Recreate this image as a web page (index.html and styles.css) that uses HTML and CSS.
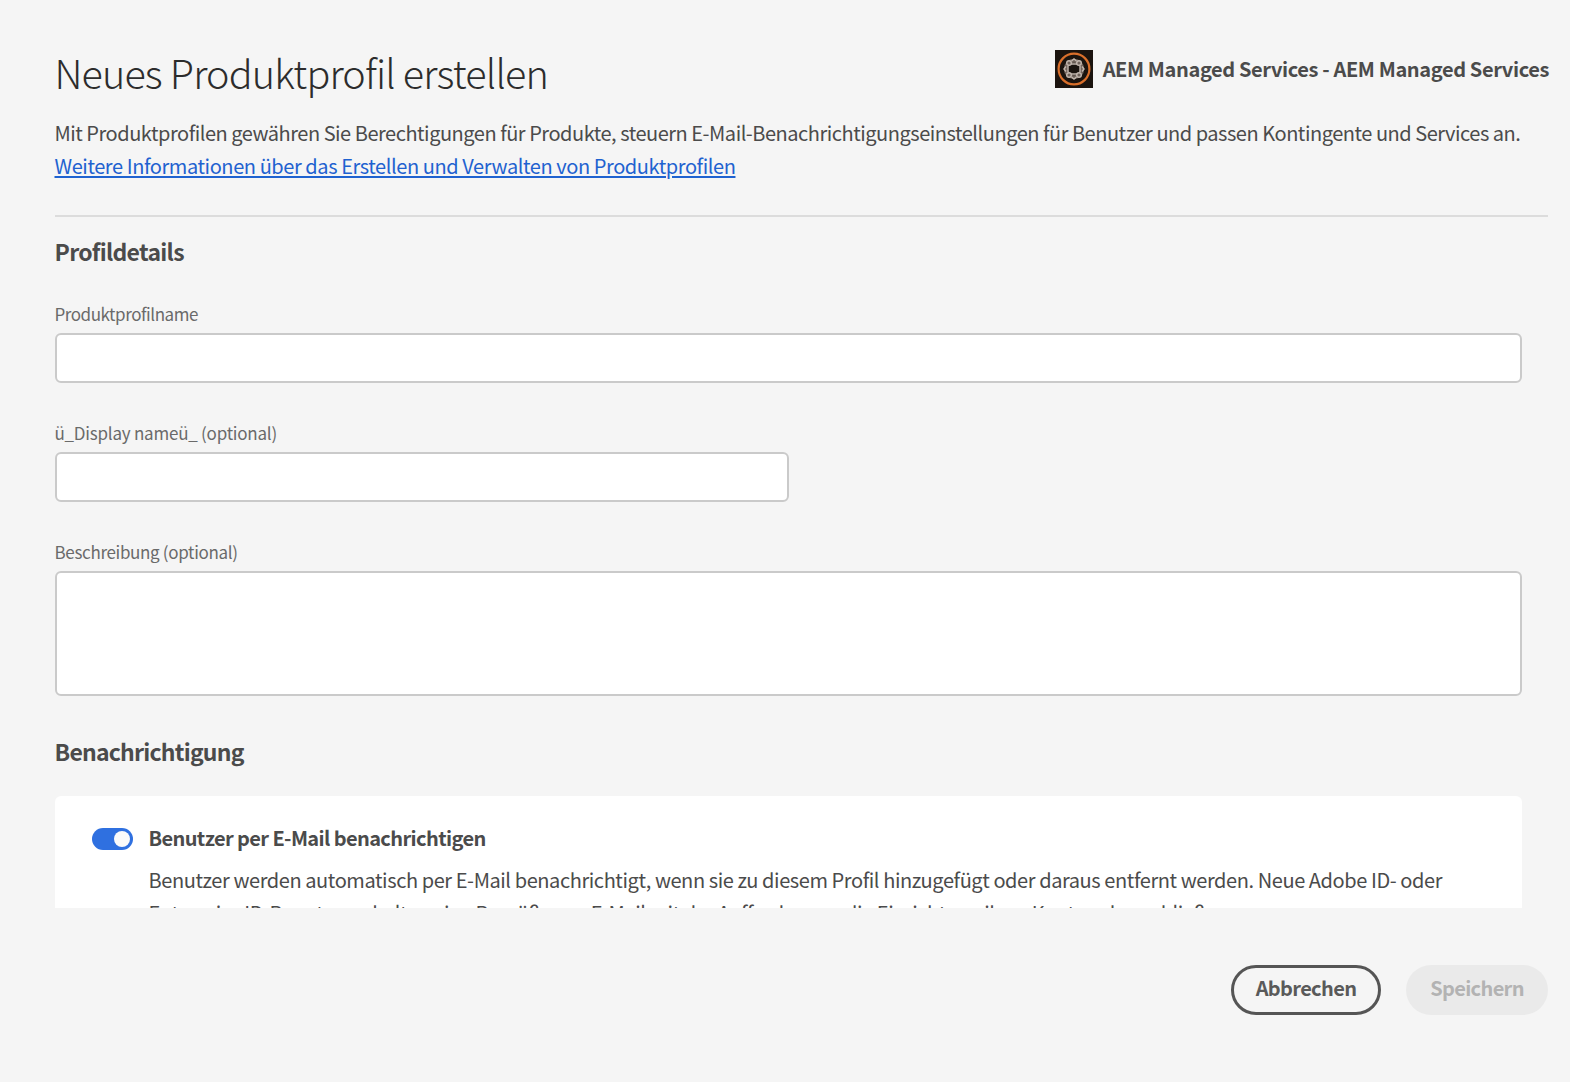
FILE: index.html
```html
<!DOCTYPE html>
<html lang="de">
<head>
<meta charset="utf-8">
<title>Neues Produktprofil erstellen</title>
<link rel="stylesheet" href="styles.css">
</head>
<body>
<main class="dialog">
  <header class="header">
    <h1 class="title">Neues Produktprofil erstellen</h1>
    <div class="product">
      <svg class="product-icon" viewBox="0 0 38 38" aria-hidden="true">
        <rect width="38" height="38" fill="#1b140f"/>
        <circle cx="19" cy="19" r="15.4" fill="none" stroke="#d96f2b" stroke-width="2.2"/>
        <circle cx="19" cy="19" r="8.200" fill="none" stroke="#6f625a" stroke-width="4"/>
        <g fill="none" stroke="#c3b7ae" stroke-width="1.400">
          <circle cx="14" cy="13" r="2.300"/><circle cx="24" cy="13" r="2.300"/>
          <circle cx="14" cy="25" r="2.300"/><circle cx="24" cy="25" r="2.300"/>
          <path d="M16.500 11l2.500-2 2.500 2M16.500 27l2.500 2 2.500-2M11 16.500l-2 2.500 2 2.500M27 16.500l2 2.500-2 2.500"/>
          <path d="M16 14h6M16 24h6M13 16v6M25 16v6"/>
        </g>
      </svg>
      <span class="product-name">AEM Managed Services - AEM Managed Services</span>
    </div>
  </header>
  <div class="intro">
    <p>Mit Produktprofilen gewähren Sie Berechtigungen für Produkte, steuern E-Mail-Benachrichtigungseinstellungen für Benutzer und passen Kontingente und Services an.</p>
    <p><a class="link" href="#">Weitere Informationen über das Erstellen und Verwalten von Produktprofilen</a></p>
  </div>
  <form class="form">
    <h2 class="section">Profildetails</h2>
    <label class="field"><span class="label name-label">Produktprofilname</span><input class="input" type="text"></label>
    <label class="field half"><span class="label display-label">ü_Display nameü_ (optional)</span><input class="input" type="text"></label>
    <label class="field tall"><span class="label">Beschreibung (optional)</span><textarea class="input area"></textarea></label>
    <h2 class="section notify">Benachrichtigung</h2>
    <section class="card">
      <span class="switch" role="switch" aria-checked="true"><span class="knob"></span></span>
      <div class="card-text">
        <h3 class="card-title">Benutzer per E-Mail benachrichtigen</h3>
        <p class="card-body">Benutzer werden automatisch per E-Mail benachrichtigt, wenn sie zu diesem Profil hinzugefügt oder daraus entfernt werden. Neue Adobe ID- oder<br><span class="second-line">Enterprise ID-Benutzer erhalten eine Begrüßungs-E-Mail mit der Aufforderung, die Einrichtung ihres Kontos abzuschließen.</span></p>
      </div>
    </section>
  </form>
  <footer class="actions">
    <button class="button cancel" type="button">Abbrechen</button>
    <button class="button save" type="button" disabled>Speichern</button>
  </footer>
</main>
</body>
</html>
```
FILE: styles.css
```css
* { box-sizing: border-box; }

body {
  margin: 0;
  background: #f5f5f5;
  color: #4b4b4b;
  font-family: "Noto Sans CJK SC", "Open Sans", sans-serif;
  font-size: 20px;
}

h1, h2, h3, p { margin: 0; white-space: nowrap; }

.dialog {
  display: flex;
  flex-direction: column;
  height: 1082px;
  padding: 50px 22px 0 54.5px;
  overflow: hidden;
}

.header {
  display: flex;
  justify-content: space-between;
  height: 66px;
}

.title {
  color: #2c2c2c;
  font-size: 39.5px;
  font-weight: 300;
  letter-spacing: -0.83px;
  line-height: 43px;
}

.product {
  display: flex;
  align-items: center;
  gap: 10px;
  height: 38px;
}

.product-icon { width: 38px; height: 38px; }

.product-name {
  margin-right: -1px;
  font-weight: 700;
  letter-spacing: -0.375px;
  line-height: 38px;
  white-space: nowrap;
}

.intro {
  height: 101px;
  border-bottom: 2px solid #dcdcdc;
  letter-spacing: -0.475px;
  line-height: 33px;
}

.link {
  color: #1f62d0;
  letter-spacing: -0.42px;
  text-decoration: underline;
  text-decoration-thickness: 2px;
  text-underline-offset: 2px;
}

.form {
  display: flex;
  flex-direction: column;
  height: 691px;
  padding-right: 26px;
  overflow: hidden;
}

.form > * { flex-shrink: 0; }

.section {
  height: 84px;
  padding-top: 16px;
  font-size: 23px;
  font-weight: 700;
  letter-spacing: -0.7px;
  line-height: 36px;
}

.notify {
  height: 100px;
  padding-top: 37px;
  letter-spacing: -0.78px;
}

.field {
  display: flex;
  flex-direction: column;
  height: 119px;
}

.half { width: 734px; }
.tall { height: 157px; }

.label {
  height: 32px;
  color: #6a6a6a;
  font-size: 17px;
  letter-spacing: -0.33px;
  line-height: 26px;
}

.name-label { letter-spacing: -0.45px; }
.display-label { letter-spacing: -0.23px; }

.input {
  width: 100%;
  height: 50px;
  margin: 0;
  border: 2px solid #cacaca;
  border-radius: 6px;
  background: #fff;
  resize: none;
}

.area { height: 125px; }

.card {
  display: flex;
  gap: 16px;
  padding: 32px 37px;
  border-radius: 6px;
  background: #fff;
}

.switch {
  display: flex;
  flex-shrink: 0;
  justify-content: flex-end;
  width: 41px;
  height: 22px;
  padding: 3px;
  border-radius: 11px;
  background: #2f70e0;
}

.knob {
  width: 16px;
  height: 16px;
  border-radius: 50%;
  background: #fafafa;
}

.card-title {
  margin-bottom: 14px;
  font-size: 20px;
  font-weight: 700;
  letter-spacing: -0.61px;
  line-height: 20px;
}

.card-body {
  margin-top: 15px;
  letter-spacing: -0.418px;
  line-height: 33px;
}

.second-line { letter-spacing: -0.44px; }

.actions {
  display: flex;
  justify-content: flex-end;
  gap: 25px;
  padding-top: 57px;
}

.button {
  height: 50px;
  padding: 0 0 5px;
  border: 0;
  border-radius: 25px;
  font: 700 20px "Noto Sans CJK SC", "Open Sans", sans-serif;
  letter-spacing: -0.65px;
}

.cancel {
  width: 150px;
  border: 3px solid #555;
  background: transparent;
  color: #5a5a5a;
}

.save {
  width: 142px;
  background: #eaeaea;
  color: #b3b3b3;
}
```
